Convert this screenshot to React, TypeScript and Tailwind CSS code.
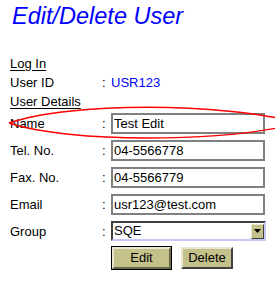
import React from "react";

const font = { fontFamily: '"Liberation Sans", Arial, sans-serif' };

function Row({ label, children }: { label: string; children: React.ReactNode }) {
  return (
    <div className="flex h-[27px] items-start pt-[2px]">
      <div className="w-[102px] pl-[10px] text-[13px] leading-[21px] text-black">{label}</div>
      <div className="w-[9px] text-[13px] leading-[21px] text-black">:</div>
      {children}
    </div>
  );
}

function TextBox({ value }: { value: string }) {
  return (
    <div className="h-[21px] w-[154px] border-2 border-[#808080] bg-white pl-[1px] text-[13px] leading-[17px] text-black">
      {value}
    </div>
  );
}

export default function App() {
  return (
    <div className="relative h-[286px] w-[275px] overflow-hidden bg-white" style={font}>
      <div className="pl-[12px] pt-[3px] text-[23.5px] italic leading-[26px] text-[#0000ff]">Edit/Delete User</div>
      <div className="h-[25px]" />
      <div className="h-[19px] pl-[10px] text-[13px] leading-[19px] text-black">
        <span className="underline underline-offset-2">Log In</span>
      </div>
      <div className="flex h-[19px] text-[13px] leading-[19px]">
        <div className="w-[102px] pl-[10px] text-black">User ID</div>
        <div className="w-[9px] text-black">:</div>
        <div className="text-[#0000ff]">USR123</div>
      </div>
      <div className="h-[19px] pl-[10px] text-[13px] leading-[19px] text-black">
        <span className="underline underline-offset-2">User Details</span>
      </div>
      <Row label="Name">
        <TextBox value="Test Edit" />
      </Row>
      <Row label="Tel. No.">
        <TextBox value="04-5566778" />
      </Row>
      <Row label="Fax. No.">
        <TextBox value="04-5566779" />
      </Row>
      <Row label="Email">
        <TextBox value="usr123@test.com" />
      </Row>
      <Row label="Group">
        <div className="flex h-[20px] w-[155px] items-center border-2 border-t-[#404040] border-l-[#404040] border-b-[#c8c8f4] border-r-[#c8c8f4] bg-white">
          <div className="flex-1 pl-[1px] text-[13px] leading-[16px] text-black">SQE</div>
          <div className="flex h-[15px] w-[13px] items-center justify-center border border-t-[#e8e6d0] border-l-[#e8e6d0] border-b-[#404040] border-r-[#404040] bg-[#c4c18a]">
            <svg width="7" height="4" viewBox="0 0 7 4">
              <polygon points="0,0 7,0 3.5,4" fill="#000" />
            </svg>
          </div>
        </div>
      </Row>
      <div className="flex pl-[111px]">
        <div className="h-[24px] w-[61px] border border-black">
          <div className="flex h-full w-full items-center justify-center border-2 border-t-[#e8e6d0] border-l-[#e8e6d0] border-b-[#6a6848] border-r-[#6a6848] bg-[#c4c18a] text-[13px] text-black">
            Edit
          </div>
        </div>
        <div className="ml-[9px] mt-[1px] flex h-[22px] w-[52px] items-center justify-center border-2 border-t-[#e8e6d0] border-l-[#e8e6d0] border-b-[#404040] border-r-[#404040] bg-[#c4c18a] text-[13px] text-black">
          Delete
        </div>
      </div>
      <svg className="pointer-events-none absolute left-0 top-0" width="275" height="286" viewBox="0 0 275 286">
        <path d="M9,123 C70,102 220,102 300,123" fill="none" stroke="#ff0000" strokeWidth="1.4" />
        <path d="M9,123 C70,143 220,143 300,123" fill="none" stroke="#ff0000" strokeWidth="1.4" />
      </svg>
    </div>
  );
}
